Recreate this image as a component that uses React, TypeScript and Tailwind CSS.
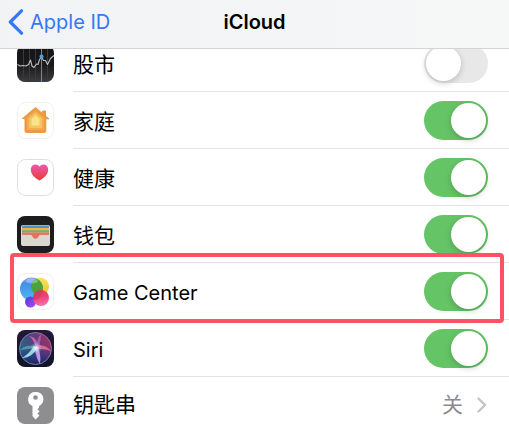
import React, { useState } from 'react';

const StocksIcon = () => (
  <svg viewBox="0 0 37 37" className="h-full w-full">
    <defs>
      <linearGradient id="stocks-bg" x1="0" y1="0" x2="0" y2="1">
        <stop offset="0" stopColor="#141416" />
        <stop offset="0.55" stopColor="#1a1a1c" />
        <stop offset="1" stopColor="#3c3c3e" />
      </linearGradient>
    </defs>
    <rect width="37" height="37" rx="8" fill="url(#stocks-bg)" />
    <path d="M6.5 0.5v36M12.5 0v37M18.5 0v37M30.5 0.5v36" stroke="#3a3a3c" strokeWidth="1" />
    <path
      d="M0.5 19.500l2.500 1.500 3-.5 3 .5 2.500-1.500 2-4.500 1.500 6 2 1.500 2.500-3.500 1.500.5 1.500-5 2-2.500 2 3.500 2 0 2 4 3-6 3.500-3"
      fill="none"
      stroke="#bdbdbd"
      strokeWidth="1.100"
      strokeLinejoin="round"
    />
    <path d="M24.500 0v37" stroke="#3d93d8" strokeWidth="1.100" />
    <circle cx="24.500" cy="11.500" r="2" fill="#4aa3ea" />
  </svg>
);

const HomeIcon = () => (
  <svg viewBox="0 0 37 37" className="h-full w-full">
    <rect x="0.5" y="0.5" width="36" height="36" rx="8" fill="#fff" stroke="#f0f0f0" />
    <path
      d="M5.500 16.500L18.500 5.500l7 6V9h3v5l3.500 2.800h-3.200v12.200q0 1.500-1.500 1.500H9.500q-1.500 0-1.500-1.500V16.800z"
      fill="#e99a43"
      stroke="#e99a43"
      strokeLinejoin="round"
    />
    <path d="M18.500 8.500l8.500 7v11.500q0 1-1 1H11q-1 0-1-1V15.500z" fill="#f0ae4e" />
    <path d="M18.500 11l6.500 5.500v8.500q0 1-1 1H13q-1 0-1-1v-8.500z" fill="#f5c562" />
    <path d="M18.500 13.500l4 3.500v6.500h-8V17z" fill="#fae38a" />
  </svg>
);

const HealthIcon = () => (
  <svg viewBox="0 0 37 37" className="h-full w-full">
    <defs>
      <linearGradient id="heart" x1="0" y1="0" x2="0" y2="1">
        <stop offset="0" stopColor="#ea5bb0" />
        <stop offset="1" stopColor="#ea3a32" />
      </linearGradient>
    </defs>
    <rect x="0.5" y="0.5" width="36" height="36" rx="8" fill="#fff" stroke="#dedede" />
    <path
      d="M22.500 21.500C18 19 13.800 15.500 13.800 10.800C13.800 5 20 4 22.500 7.500C25 4 31.200 5 31.200 10.800C31.200 15.500 27 19 22.500 21.500z"
      fill="url(#heart)"
    />
  </svg>
);

const WalletIcon = () => (
  <svg viewBox="0 0 37 37" className="h-full w-full">
    <rect width="37" height="37" rx="8" fill="#1d1d1f" />
    <rect x="4" y="9" width="29" height="21" rx="2" fill="#d9d7cf" />
    <path d="M5 12v-1q0-1.500 1.500-1.500h24q1.500 0 1.500 1.500v1z" fill="#4595c9" />
    <path d="M5 12h27v2.200H5z" fill="#f0b340" />
    <path d="M5 14.200h27v2.300H5z" fill="#77b34b" />
    <path d="M5 16.500h27v2H5z" fill="#e4725f" />
    <path d="M5 18h27v.800h-8.500c-2 0-2 4-5 4s-3-4-5-4H5z" fill="#e4725f" />
  </svg>
);

const GameCenterIcon = () => (
  <svg viewBox="0 0 37 37" className="h-full w-full">
    <defs>
      <linearGradient id="gc-blue" x1="0.3" y1="0" x2="0.4" y2="1">
        <stop offset="0" stopColor="#8fa6f0" />
        <stop offset="0.25" stopColor="#438ee8" />
        <stop offset="1" stopColor="#4dbdf2" />
      </linearGradient>
      <linearGradient id="gc-yellow" x1="0" y1="0" x2="0" y2="1">
        <stop offset="0" stopColor="#f8e25b" />
        <stop offset="1" stopColor="#e9c62c" />
      </linearGradient>
      <linearGradient id="gc-pink" x1="0" y1="0" x2="0.2" y2="1">
        <stop offset="0" stopColor="#e6454e" />
        <stop offset="0.5" stopColor="#ed3f78" />
        <stop offset="1" stopColor="#f26da8" />
      </linearGradient>
      <linearGradient id="gc-purple" x1="0" y1="0" x2="1" y2="1">
        <stop offset="0" stopColor="#5536d4" />
        <stop offset="1" stopColor="#a552f5" />
      </linearGradient>
      <clipPath id="gc-big">
        <circle cx="14.500" cy="16" r="11.500" />
      </clipPath>
    </defs>
    <rect x="0.5" y="0.5" width="36" height="36" rx="8" fill="#fff" stroke="#f0f0f0" />
    <circle cx="23" cy="13.500" r="9" fill="url(#gc-yellow)" />
    <circle cx="14.500" cy="16" r="11.500" fill="url(#gc-blue)" />
    <circle cx="23" cy="13.500" r="9" fill="#4ba13c" clipPath="url(#gc-big)" />
    <circle cx="13.500" cy="29" r="5.500" fill="url(#gc-purple)" />
    <circle cx="24" cy="25" r="8" fill="url(#gc-pink)" />
    <circle cx="24" cy="25" r="8" fill="#b02a56" opacity="0.300" clipPath="url(#gc-big)" />
    <ellipse cx="15" cy="8" rx="6" ry="2.500" fill="#fff" opacity="0.300" />
  </svg>
);

const SiriIcon = () => (
  <svg viewBox="0 0 37 37" className="h-full w-full">
    <defs>
      <linearGradient id="siri-bg" x1="0" y1="0" x2="0" y2="1">
        <stop offset="0" stopColor="#25173b" />
        <stop offset="1" stopColor="#101528" />
      </linearGradient>
      <linearGradient id="siri-orb" x1="0" y1="0.6" x2="1" y2="0.300">
        <stop offset="0" stopColor="#226c80" />
        <stop offset="0.5" stopColor="#54407f" />
        <stop offset="1" stopColor="#a82d5e" />
      </linearGradient>
      <linearGradient id="siri-low" x1="0" y1="0" x2="0" y2="1">
        <stop offset="0.4" stopColor="#2a3aa0" stopOpacity="0" />
        <stop offset="1" stopColor="#17225f" />
      </linearGradient>
      <radialGradient id="siri-glow">
        <stop offset="0" stopColor="#fff" />
        <stop offset="0.5" stopColor="#d7f2ff" stopOpacity="0.400" />
        <stop offset="1" stopColor="#7ac9ff" stopOpacity="0" />
      </radialGradient>
    </defs>
    <rect width="37" height="37" rx="8" fill="url(#siri-bg)" />
    <circle cx="18.500" cy="18.500" r="16" fill="url(#siri-orb)" />
    <circle cx="18.500" cy="18.500" r="16" fill="url(#siri-low)" stroke="#8f8ab5" strokeWidth="0.800" />
    <path d="M19 17C17 12 15 8 12 6C18 7 21 11 21 17z" fill="#e978b8" opacity="0.700" />
    <path d="M19 17C20 11 21 7 24 4C24 9 23 13 22 17z" fill="#c56fd2" opacity="0.600" />
    <path d="M19 16C25 14 30 16 34 21C28 19 23 19 19 19z" fill="#f07da0" opacity="0.750" />
    <path d="M18 16C12 15 6 16 3 20C9 19 14 19 19 18z" fill="#68d9c9" opacity="0.500" />
    <path d="M17 16C14 21 10 25 5 28C12 28 18 23 20 18z" fill="#a7f1f2" opacity="0.850" />
    <path d="M18 18C19 25 20 30 23 34C24 28 23 22 21 17z" fill="#e0aef3" opacity="0.800" />
    <circle cx="19" cy="18" r="6" fill="url(#siri-glow)" />
  </svg>
);

const KeychainIcon = () => (
  <svg viewBox="0 0 37 37" className="h-full w-full">
    <rect width="37" height="37" rx="8" fill="#8e8e90" />
    <path
      fillRule="evenodd"
      d="M18.500 5a7.300 7.300 0 0 0-3 14v10l3 3.500 4-4-2.200-2 2.200-2-2-2.200 1.500-1.500V19a7.300 7.300 0 0 0-3.500-14zM18.500 8.200a2.300 2.300 0 1 1 0 4.600a2.300 2.300 0 0 1 0-4.600z"
      fill="#fff"
    />
  </svg>
);

const apps = [
  { id: 'stocks', label: '股市', icon: <StocksIcon />, enabled: false, textSize: 'text-[21px]' },
  { id: 'home', label: '家庭', icon: <HomeIcon />, enabled: true, textSize: 'text-[21px]' },
  { id: 'health', label: '健康', icon: <HealthIcon />, enabled: true, textSize: 'text-[21px]' },
  { id: 'wallet', label: '钱包', icon: <WalletIcon />, enabled: true, textSize: 'text-[21px]' },
  { id: 'game-center', label: 'Game Center', icon: <GameCenterIcon />, enabled: true, textSize: 'text-xl', highlighted: true },
  { id: 'siri', label: 'Siri', icon: <SiriIcon />, enabled: true, textSize: 'text-xl' },
];

const App = () => {
  const [enabled, setEnabled] = useState<Record<string, boolean>>(
    Object.fromEntries(apps.map(app => [app.id, app.enabled]))
  );

  const handleToggle = (id: string) => {
    setEnabled(prev => ({ ...prev, [id]: !prev[id] }));
  };

  const renderSwitch = (id: string) => (
    <input
      id={id}
      type="checkbox"
      role="switch"
      checked={enabled[id]}
      onChange={() => handleToggle(id)}
      className="relative h-[39px] w-16 shrink-0 cursor-pointer appearance-none rounded-full bg-[#e8e8e8] before:absolute before:top-[2px] before:left-[2px] before:h-[35px] before:w-[35px] before:rounded-full before:bg-white before:shadow-[0_2px_6px_rgba(0,0,0,0.2)] checked:bg-[#65c466] checked:before:left-[27px]"
    />
  );

  return (
    <div className="flex h-screen flex-col overflow-hidden bg-white font-['Inter','Noto_Sans_CJK_SC',sans-serif] text-black">
      {/* Navigation bar */}
      <header className="z-10 grid h-[49px] shrink-0 grid-cols-[1fr_auto_1fr] items-center border-b border-[#d4d4d6] bg-linear-to-r from-[#f1f3f5] to-[#f6f7f7] px-2 pb-1">
        <a href="#apple-id" className="flex items-center gap-[6px] text-xl text-[#3478f6]">
          <svg viewBox="0 0 16 26" className="h-[26px] w-4" fill="none" stroke="currentColor" strokeWidth="3.200" strokeLinecap="round" strokeLinejoin="round">
            <path d="M13.500 1.800L2.300 13l11.200 11.200" />
          </svg>
          Apple ID
        </a>
        <h1 className="text-xl font-semibold">iCloud</h1>
      </header>

      {/* App list, scrolled partly under the bar */}
      <ul className="-mt-[14px]">
        {apps.map(app => (
          <li key={app.id} className="relative flex h-[57px] items-center gap-[19px] pl-[17px]">
            <div className="h-[37px] w-[37px] shrink-0">{app.icon}</div>
            <div className="flex h-full grow items-center justify-between border-b border-[#e3e3e5] pr-[21px]">
              <label htmlFor={app.id} className={`pt-[3px] ${app.textSize}`}>
                {app.label}
              </label>
              {renderSwitch(app.id)}
            </div>
            {app.highlighted && (
              <div className="pointer-events-none absolute -top-[10px] right-[5px] -bottom-[3px] left-[10px] z-10 rounded-sm border-4 border-[#ff5364]" />
            )}
          </li>
        ))}
        <li>
          <a href="#keychain" className="flex h-14 items-center gap-[19px] pr-[22px] pl-[17px] text-[21px]">
            <div className="h-[37px] w-[37px] shrink-0">
              <KeychainIcon />
            </div>
            <span className="grow">钥匙串</span>
            <span className="flex items-center gap-[14px] text-[#8a8a8e]">
              关
              <svg viewBox="0 0 10 16" className="h-4 w-[10px]" fill="none" stroke="#c4c4c7" strokeWidth="2.400" strokeLinecap="round" strokeLinejoin="round">
                <path d="M1.500 1.500L8 8l-6.500 6.500" />
              </svg>
            </span>
          </a>
        </li>
      </ul>
    </div>
  );
};

export default App;
